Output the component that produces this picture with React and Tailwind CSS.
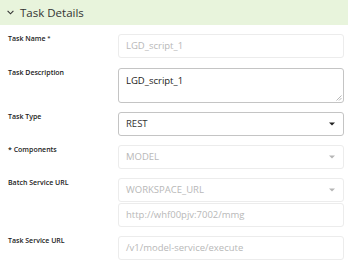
import React from "react";

const font = { fontFamily: '"Open Sans", "Noto Sans", sans-serif' };

function Caret({ disabled }) {
  return (
    <svg width="6" height="4" viewBox="0 0 6 4" className="shrink-0 mr-[1px]">
      <path d="M0 0.5 H6 L3 3.5 Z" fill={disabled ? "#b5b5b5" : "#222"} />
    </svg>
  );
}

function Label({ children }) {
  return (
    <div className="w-[110px] shrink-0 text-[7px] leading-[8px] font-semibold text-[#222] pt-[1px]">
      {children}
    </div>
  );
}

function Box({ children, disabled, className = "" }) {
  return (
    <div
      className={`w-[226px] h-[24px] rounded-[3px] border flex items-center px-[7px] text-[9.5px] ${
        disabled ? "border-[#ececec] text-[#b8b8b8]" : "border-[#c4c4c4] text-[#333]"
      } ${className}`}
    >
      {children}
    </div>
  );
}

export default function App() {
  return (
    <div className="w-[357px] h-[270px] bg-white overflow-hidden" style={font}>
      <div className="w-[348px] h-[25px] bg-[#e8f4dc] flex items-center pl-[7px] gap-[6px]">
        <svg width="7" height="5" viewBox="0 0 7 5">
          <path d="M0.6 0.8 L3.5 3.8 L6.4 0.8" fill="none" stroke="#333" strokeWidth="1.1" />
        </svg>
        <span className="text-[11.5px] text-[#333]">Task Details</span>
      </div>
      <div className="pl-[8px] flex flex-col">
        <div className="flex mt-[9px]">
          <Label>
            Task Name <sup className="text-[6px] relative -top-[1px]">*</sup>
          </Label>
          <Box disabled>LGD_script_1</Box>
        </div>
        <div className="flex mt-[10px]">
          <Label>Task Description</Label>
          <div className="relative w-[226px] h-[35px] rounded-[3px] border border-[#c4c4c4] px-[7px] pt-[5px] text-[9.5px] text-[#222]">
            LGD_script_1
            <svg width="6" height="6" viewBox="0 0 6 6" className="absolute right-[1px] bottom-[1px]">
              <path d="M5.5 0.5 L0.5 5.5 M5.5 3 L3 5.5" stroke="#999" strokeWidth="0.7" />
            </svg>
          </div>
        </div>
        <div className="flex mt-[9px]">
          <Label>Task Type</Label>
          <Box className="justify-between">
            <span>REST</span>
            <Caret />
          </Box>
        </div>
        <div className="flex mt-[9px]">
          <Label>* Components</Label>
          <Box disabled className="justify-between">
            <span>MODEL</span>
            <Caret disabled />
          </Box>
        </div>
        <div className="flex mt-[9px]">
          <Label>Batch Service URL</Label>
          <div className="flex flex-col gap-[1px]">
            <Box disabled className="justify-between">
              <span>WORKSPACE_URL</span>
              <Caret disabled />
            </Box>
            <Box disabled>http://whf00pjv:7002/mmg</Box>
          </div>
        </div>
        <div className="flex mt-[9px]">
          <Label>Task Service URL</Label>
          <Box disabled>/v1/model-service/execute</Box>
        </div>
      </div>
    </div>
  );
}
